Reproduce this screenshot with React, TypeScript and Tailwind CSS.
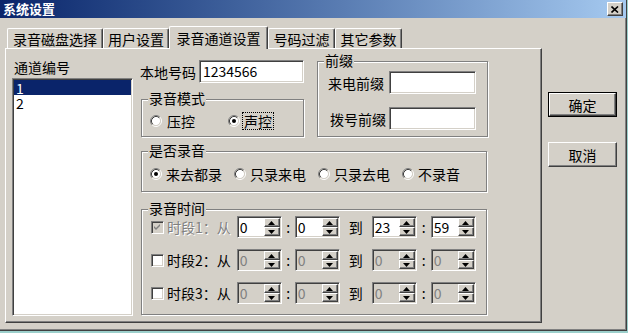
import type { ReactNode } from "react";

const sunken = "border border-t-[#808080] border-l-[#808080] border-b-white border-r-white shadow-[inset_1px_1px_0_#404040,inset_-1px_-1px_0_#d4d0c8]";
const raised = "border border-t-white border-l-white border-b-[#404040] border-r-[#404040] shadow-[inset_-1px_-1px_0_#808080]";

function Radio({ checked }: { checked?: boolean }) {
  return (
    <svg width="12" height="12" viewBox="0 0 12 12" className="shrink-0">
      <circle cx="6" cy="6" r="4.2" fill="#fff" />
      <path d="M2.11 9.89 A5.5 5.5 0 0 1 9.89 2.11" stroke="#808080" fill="none" />
      <path d="M9.89 2.11 A5.5 5.5 0 0 1 2.11 9.89" stroke="#fff" fill="none" />
      <path d="M2.82 9.18 A4.5 4.5 0 0 1 9.18 2.82" stroke="#404040" fill="none" />
      <path d="M9.18 2.82 A4.5 4.5 0 0 1 2.82 9.18" stroke="#d4d0c8" fill="none" />
      {checked && <circle cx="6" cy="6" r="2" fill="#000" />}
    </svg>
  );
}

function Checkbox({ checked, disabled }: { checked?: boolean; disabled?: boolean }) {
  return (
    <div className={`w-[13px] h-[13px] shrink-0 ${sunken} ${disabled ? "bg-[#d4d0c8]" : "bg-white"} flex items-center justify-center`}>
      {checked && (
        <svg width="7" height="7" viewBox="0 0 7 7">
          <path d="M0 2 L2 4 L6 0 L6 2 L2 6 L0 4 Z" fill={disabled ? "#808080" : "#000"} />
        </svg>
      )}
    </div>
  );
}

function Group({ title, className, children }: { title: string; className: string; children?: ReactNode }) {
  return (
    <div className={`relative border border-[#808080] shadow-[inset_1px_1px_0_#fff,1px_1px_0_#fff] ${className}`}>
      <span className="absolute -top-[9px] left-[6px] px-[1px] h-[15px] bg-[#d4d0c8] leading-[15px]">{title}</span>
      {children}
    </div>
  );
}

function Arrow({ up }: { up?: boolean }) {
  return (
    <svg width="7" height="4" viewBox="0 0 7 4">
      <path d={up ? "M3.5 0 L7 4 L0 4 Z" : "M0 0 L7 0 L3.5 4 Z"} fill="#000" />
    </svg>
  );
}

function Spin({ value, disabled }: { value: string; disabled?: boolean }) {
  return (
    <div className={`w-[45px] h-[22px] flex ${sunken} p-[1px] ${disabled ? "bg-[#d4d0c8]" : "bg-white"}`}>
      <span className={`flex-1 pl-[1px] leading-[18px] ${disabled ? "text-[#808080]" : ""}`}>{value}</span>
      <div className="flex flex-col w-[16px]">
        <div className={`h-[9px] bg-[#d4d0c8] ${raised} flex items-center justify-center`}>
          <Arrow up />
        </div>
        <div className={`h-[9px] bg-[#d4d0c8] ${raised} flex items-center justify-center`}>
          <Arrow />
        </div>
      </div>
    </div>
  );
}

function TimeRow({ n, values, on }: { n: number; values: string[]; on?: boolean }) {
  const dis = on ? "text-[#808080] [text-shadow:1px_1px_0_#fff]" : "";
  return (
    <div className="flex items-center h-[22px]">
      <div className="ml-[9px]">
        <Checkbox checked={on} disabled={on} />
      </div>
      <span className={`ml-[3px] leading-[16px] ${dis}`}>时段{n}：从</span>
      <div className="ml-[6px]">
        <Spin value={values[0]} disabled={!on} />
      </div>
      <span className="w-[13px] text-center leading-[16px]">:</span>
      <Spin value={values[1]} disabled={!on} />
      <span className="w-[32px] text-center leading-[16px]">到</span>
      <Spin value={values[2]} disabled={!on} />
      <span className="w-[14px] text-center leading-[16px]">:</span>
      <Spin value={values[3]} disabled={!on} />
    </div>
  );
}

const tabs = [
  { label: "录音磁盘选择", w: "w-[96px]" },
  { label: "用户设置", w: "w-[66px]" },
  { label: "录音通道设置", w: "w-[99px]", active: true },
  { label: "号码过滤", w: "w-[67px]" },
  { label: "其它参数", w: "w-[67px]" },
];

export default function App() {
  return (
    <div className="w-[628px] h-[333px] bg-[#9ccfcb] overflow-hidden text-[14px] text-black font-['Noto_Sans_CJK_SC','Noto_Sans_CJK_JP',sans-serif]">
      <div className="w-[627px] h-[331px] bg-[#d4d0c8] flex flex-col border-r border-b border-r-[#404040] border-b-[#404040] shadow-[inset_-1px_-1px_0_#808080]">
        {/* title bar */}
        <div className="h-[18px] flex items-center bg-gradient-to-r from-[#0a246a] to-[#a6caf0]">
          <span className="ml-[3px] text-[13px] font-bold text-white leading-[16px]">系统设置</span>
          <div className={`ml-auto mr-[3px] w-[16px] h-[14px] bg-[#d4d0c8] ${raised} flex items-center justify-center`}>
            <svg width="8" height="7" viewBox="0 0 8 7">
              <path d="M0.5 0.5 L7 6.5 M7 0.5 L0.5 6.5" stroke="#000" strokeWidth="1.6" />
            </svg>
          </div>
        </div>

        <div className="flex">
          {/* tab control */}
          <div className="ml-[5px] mt-[8px] flex flex-col">
            <div className="h-[22px] flex items-end pl-[2px]">
              {tabs.map((t) =>
                t.active ? (
                  <div
                    key={t.label}
                    className={`${t.w} h-[23px] -mb-[1px] relative z-10 bg-[#d4d0c8] border-t border-l border-white border-r border-r-[#404040] shadow-[inset_-1px_0_0_#808080] rounded-t-[2px] text-center pt-[3px] leading-[16px]`}
                  >
                    {t.label}
                  </div>
                ) : (
                  <div
                    key={t.label}
                    className={`${t.w} h-[20px] border-t border-l border-white border-r border-r-[#404040] shadow-[inset_-1px_0_0_#808080] rounded-t-[2px] text-center pt-[2px] leading-[16px]`}
                  >
                    {t.label}
                  </div>
                )
              )}
            </div>
            <div className="w-[537px] h-[275px] border-t border-l border-white border-r border-b border-r-[#404040] border-b-[#404040] shadow-[inset_-1px_-1px_0_#808080] flex">
              {/* channel list */}
              <div className="ml-[6px] pt-[10px] flex flex-col">
                <span className="pl-[2px] leading-[16px]">通道编号</span>
                <div className={`mt-[3px] w-[121px] h-[238px] bg-white ${sunken} p-[1px]`}>
                  <div className="h-[15px] flex items-center leading-none pl-[2px] bg-[#0a246a] text-white">1</div>
                  <div className="h-[15px] flex items-center leading-none pl-[2px]">2</div>
                </div>
              </div>

              {/* settings */}
              <div className="ml-[7px] pt-[11px] flex flex-col">
                <div className="flex">
                  <div className="flex flex-col">
                    <div className="flex items-center h-[23px]">
                      <span className="leading-[16px]">本地号码</span>
                      <div className={`ml-[3px] w-[105px] h-[23px] bg-white ${sunken} pl-[3px] leading-[20px]`}>1234566</div>
                    </div>
                    <Group title="录音模式" className="ml-[1px] mt-[16px] w-[163px] h-[38px]">
                      <div className="mt-[13px] flex items-center h-[16px]">
                        <div className="ml-[8px]"><Radio /></div>
                        <span className="ml-[5px] leading-[16px]">压控</span>
                        <div className="ml-[33px]"><Radio checked /></div>
                        <span className="ml-[2px] px-[1px] border border-dotted border-black leading-[16px]">声控</span>
                      </div>
                    </Group>
                  </div>
                  <Group title="前缀" className="ml-[13px] mt-[1px] w-[171px] h-[76px]">
                    <div className="mt-[9px] flex items-center">
                      <span className="ml-[10px] leading-[16px]">来电前缀</span>
                      <div className={`ml-[5px] w-[87px] h-[23px] bg-white ${sunken}`} />
                    </div>
                    <div className="mt-[13px] flex items-center">
                      <span className="ml-[12px] leading-[16px]">拨号前缀</span>
                      <div className={`ml-[3px] w-[87px] h-[23px] bg-white ${sunken}`} />
                    </div>
                  </Group>
                </div>

                <Group title="是否录音" className="ml-[1px] mt-[14px] w-[346px] h-[41px]">
                  <div className="mt-[14px] ml-[8px] flex h-[16px]">
                    {["来去都录", "只录来电", "只录去电", "不录音"].map((t, i) => (
                      <div key={t} className="w-[84px] flex items-center">
                        <Radio checked={i === 0} />
                        <span className="ml-[4px] leading-[16px]">{t}</span>
                      </div>
                    ))}
                  </div>
                </Group>

                <Group title="录音时间" className="ml-[1px] mt-[17px] w-[346px] h-[106px]">
                  <div className="mt-[6px] flex flex-col gap-[11px]">
                    <TimeRow n={1} values={["0", "0", "23", "59"]} on />
                    <TimeRow n={2} values={["0", "0", "0", "0"]} />
                    <TimeRow n={3} values={["0", "0", "0", "0"]} />
                  </div>
                </Group>
              </div>
            </div>
          </div>

          {/* buttons */}
          <div className="ml-[6px] mt-[74px] flex flex-col gap-[25px]">
            <div className="w-[69px] h-[25px] border border-black">
              <div className={`w-full h-full ${raised} flex items-center justify-center leading-[16px]`}>确定</div>
            </div>
            <div className={`w-[69px] h-[25px] ${raised} flex items-center justify-center leading-[16px]`}>取消</div>
          </div>
        </div>
      </div>
    </div>
  );
}
